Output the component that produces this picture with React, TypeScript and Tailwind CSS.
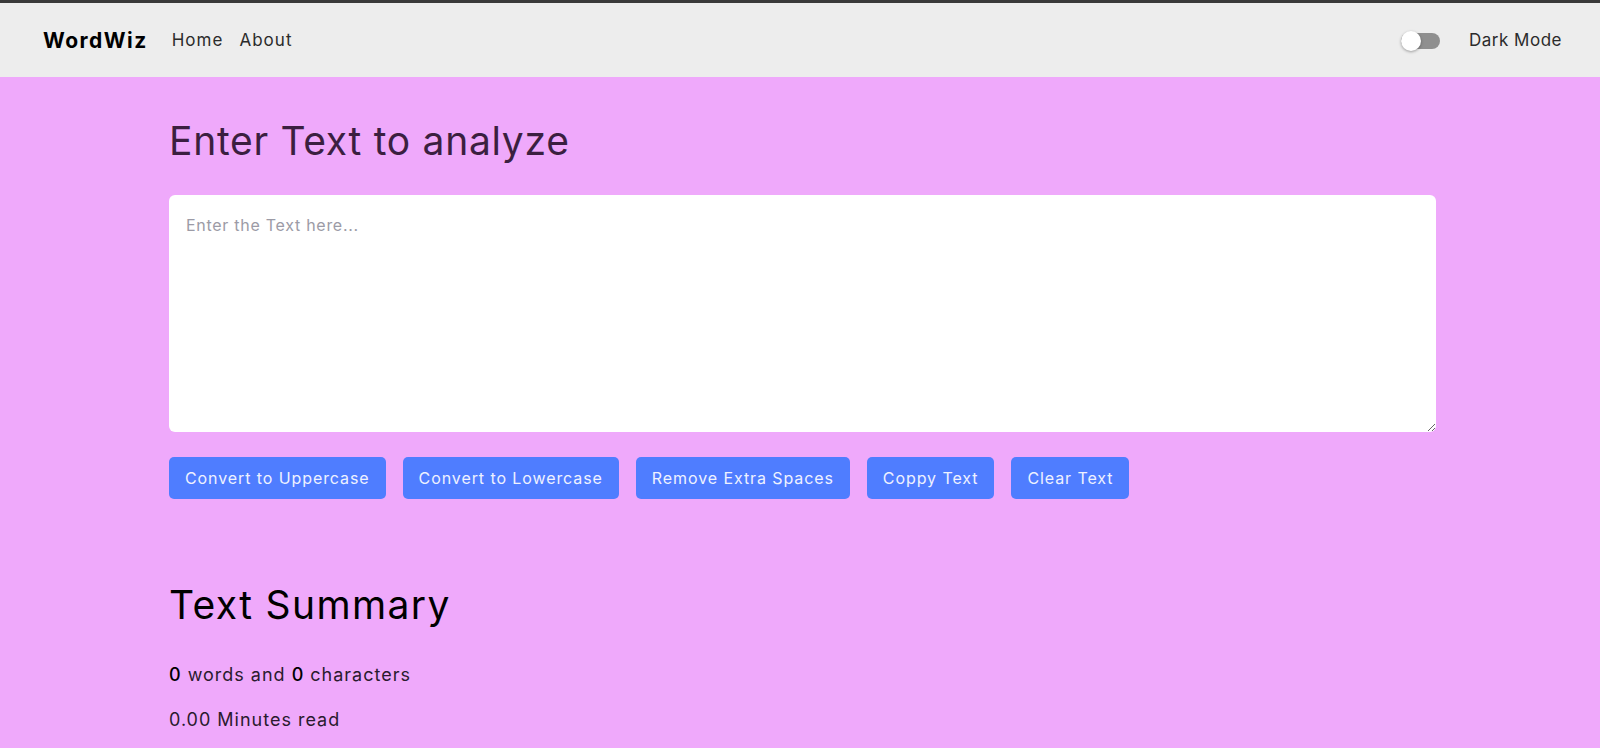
import { useState } from 'react'

export default function App() {
  const [text, setText] = useState('')
  const [dark, setDark] = useState(false)

  const words = text.split(/\s+/).filter((w) => w.length > 0).length
  const buttons = [
    'Convert to Uppercase',
    'Convert to Lowercase',
    'Remove Extra Spaces',
    'Coppy Text',
    'Clear Text'
  ]

  return (
    <div className="min-h-[748px] bg-[#efa9fb] font-['Inter',sans-serif] border-t-[3px] border-[#3a3a3a]">
      <nav className="h-[74px] bg-[#ededed] flex items-center pl-[43px] pr-[38px] pt-[2px]">
        <div className="text-[21px] font-bold text-black tracking-[0.07em]">WordWiz</div>
        <div className="flex gap-[16px] ml-[24px] text-[17px] text-[#2b2b2b] tracking-[0.06em]">
          <a href="#">Home</a>
          <a href="#">About</a>
        </div>
        <div className="ml-auto flex items-center">
          <button
            onClick={() => setDark(!dark)}
            className="relative w-[39px] h-[16px] rounded-full bg-[#8f8f8f]">
            <span className="absolute left-0 top-[-2px] w-[20px] h-[20px] rounded-full bg-white shadow-[0_1px_3px_rgba(0,0,0,0.35)]" />
          </button>
          <span className="ml-[29px] text-[17px] text-[#2b2b2b] tracking-[0.03em]">Dark Mode</span>
        </div>
      </nav>

      <main className="pl-[169px] pt-[40px]">
        <h1 className="text-[39px] leading-[48px] text-[#3b1f40] tracking-[0.018em]">
          Enter Text to analyze
        </h1>
        <textarea
          value={text}
          onChange={(e) => setText(e.target.value)}
          placeholder="Enter the Text here..."
          className="block mt-[30px] w-[1267px] h-[237px] bg-white rounded-[6px] px-[17px] pt-[18px] text-[16px] text-[#222] placeholder:text-[#9c9ba6] outline-none tracking-[0.045em]"
        />
        <div className="flex gap-[17px] mt-[25px]">
          {buttons.map((label, index) => (
            <button
              key={index}
              className="h-[42px] px-[16px] rounded-[5px] bg-[#4f7dff] text-[#eef1ff] text-[16px] tracking-[0.057em]">
              {label}
            </button>
          ))}
        </div>

        <h2 className="mt-[82px] text-[39px] leading-[48px] text-black tracking-[0.035em]">
          Text Summary
        </h2>
        <p className="mt-[33px] text-[18px] leading-[26px] text-[#2a1a2e] tracking-[0.055em]">
          <span className="font-medium text-black">{words}</span> words and{' '}
          <span className="font-medium text-black">{text.length}</span> characters
        </p>
        <p className="mt-[19px] text-[18px] leading-[26px] text-[#2a1a2e] tracking-[0.055em]">
          {(0.008 * words).toFixed(2)} Minutes read
        </p>
      </main>
    </div>
  )
}
